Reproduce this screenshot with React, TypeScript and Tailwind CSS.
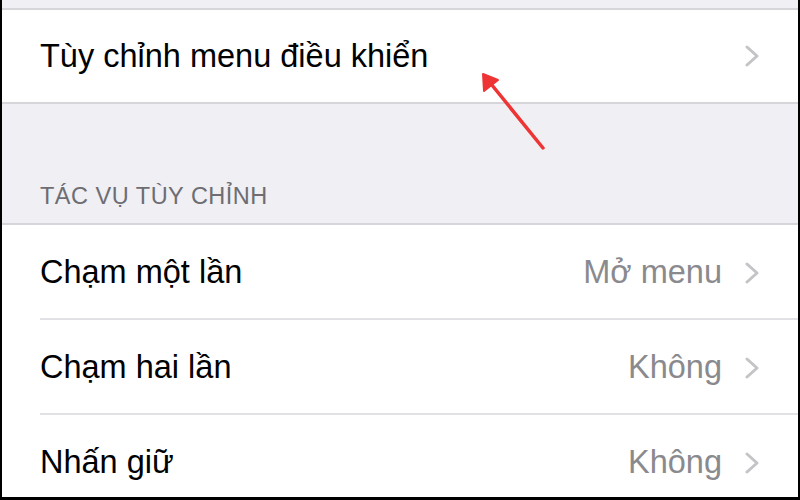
import React from "react";

const Chevron = () => (
  <svg width="16" height="22" viewBox="0 0 16 22" className="shrink-0">
    <path d="M3 2 L13 11 L3 20" fill="none" stroke="#c4c4c8" strokeWidth="3" strokeLinecap="round" strokeLinejoin="round" />
  </svg>
);

const Row = ({ label, value, last }: { label: string; value?: string; last?: boolean }) => (
  <div className="relative flex h-[95px] items-center justify-between bg-white pl-[38px] pr-[38px]">
    <span className="text-[32.5px] text-black">{label}</span>
    <div className="flex items-center gap-[22px]">
      {value && <span className="text-[32.5px] text-[#8a8a8e]">{value}</span>}
      <Chevron />
    </div>
    {!last && <div className="absolute bottom-0 left-[38px] right-0 h-[2px] bg-[#e2e2e6]" />}
  </div>
);

export default function App() {
  return (
    <div className="w-[800px] h-[500px] bg-black pl-[2px] pr-[2px] pb-[3px]" style={{ fontFamily: '"Liberation Sans", Arial, sans-serif' }}>
      <div className="relative h-full w-full overflow-hidden bg-[#efeff4]">
        <div className="h-[10px] border-b-2 border-[#d6d6da]" />
        <div className="flex h-[94px] items-center justify-between bg-white pl-[38px] pr-[38px] border-b-2 border-[#d6d6da]">
          <span className="text-[32.5px] text-black">Tùy chỉnh menu điều khiển</span>
          <Chevron />
        </div>
        <div className="flex h-[121px] items-end pb-[9px] pl-[38px] border-b-2 border-[#d6d6da]">
          <span className="text-[23.5px] tracking-[0.5px] text-[#6d6d72]">TÁC VỤ TÙY CHỈNH</span>
        </div>
        <Row label="Chạm một lần" value="Mở menu" />
        <Row label="Chạm hai lần" value="Không" />
        <Row label="Nhấn giữ" value="Không" last />
        <svg className="absolute left-0 top-0" width="796" height="497" viewBox="0 0 796 497">
          <line x1="541" y1="148" x2="485" y2="79" stroke="#ee3434" strokeWidth="3.5" strokeLinecap="round" />
          <path d="M481 74 L482 91 L496 80 Z" fill="#ee3434" stroke="#ee3434" strokeWidth="2" strokeLinejoin="round" />
        </svg>
      </div>
    </div>
  );
}
